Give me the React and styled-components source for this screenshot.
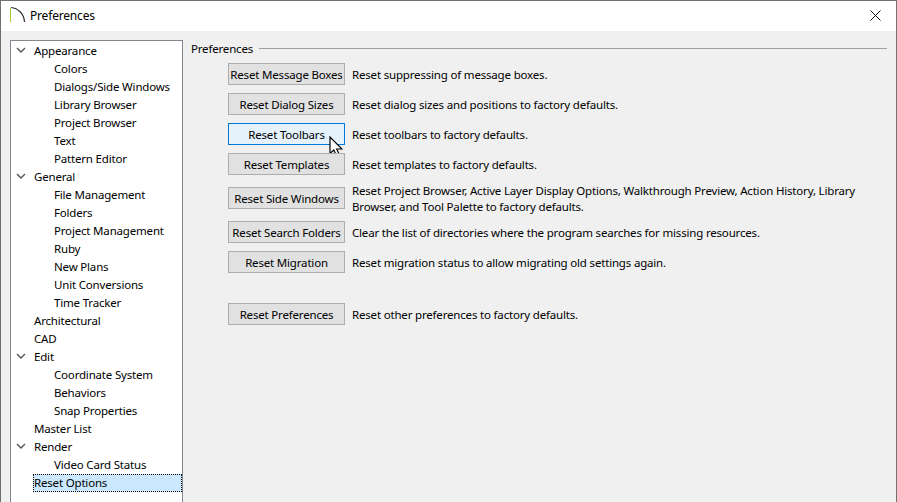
import React from "react";
import styled, { createGlobalStyle } from "styled-components";

const GlobalStyle = createGlobalStyle`
  html, body { margin: 0; padding: 0; background: #f0f0f0; }
  body { font-family: "Noto Sans", "Open Sans", sans-serif; font-size: 11.5px; letter-spacing: -0.18px; color: #000; }
`;

const Window = styled.div`
  width: 897px;
  height: 502px;
  box-sizing: border-box;
  border: 1px solid #707070;
  border-bottom: none;
  display: flex;
  flex-direction: column;
  overflow: hidden;
  background: #f0f0f0;
`;

const TitleBar = styled.div`
  height: 30px;
  flex: none;
  background: #fff;
  display: flex;
  align-items: center;
  padding: 0 15px 2px 9px;
  box-sizing: border-box;
  gap: 4px;
`;

const TitleText = styled.div`
  flex: 1;
  line-height: 28px;
  font-size: 12px;
  padding-top: 2px;
`;

const Body = styled.div`
  flex: 1;
  display: flex;
  padding: 9px 9px 0 9px;
  min-height: 0;
`;

const Tree = styled.div`
  width: 173px;
  flex: none;
  box-sizing: border-box;
  background: #fff;
  border: 1px solid #828790;
  border-bottom: none;
  padding-top: 1px;
`;

const TreeRow = styled.div`
  height: 18px;
  line-height: 18px;
  display: flex;
  align-items: center;
  padding-left: ${(p) => (p.$child ? "43px" : "23px")};
  position: relative;
  white-space: nowrap;
`;

const SelectedLabel = styled.div`
  flex: 1;
  align-self: stretch;
  background: #cce8ff;
  outline: 1px dotted #000;
  outline-offset: -1px;
  margin: 0 0 0 -1px;
  padding-left: 1px;
`;

const Chevron = styled.svg`
  position: absolute;
  left: 5px;
  top: 5px;
`;

const Panel = styled.div`
  flex: 1;
  padding-left: 8px;
  min-width: 0;
`;

const Legend = styled.div`
  display: flex;
  align-items: center;
  height: 16px;
  margin-bottom: 6px;
`;

const LegendLine = styled.div`
  flex: 1;
  height: 1px;
  background: #a0a0a0;
  margin-left: 6px;
`;

const Rows = styled.div`
  display: flex;
  flex-direction: column;
  gap: 8px;
  padding-left: 37px;
  margin-top: 7px;
`;

const Row = styled.div`
  display: flex;
  align-items: center;
  gap: 7px;
  height: ${(p) => (p.$tall ? "30px" : "22px")};
  margin-top: ${(p) => (p.$apart ? "22px" : "0")};
`;

const ResetButton = styled.div`
  width: 117px;
  height: 22px;
  flex: none;
  box-sizing: border-box;
  border: 1px solid ${(p) => (p.$hot ? "#0078d7" : "#adadad")};
  background: ${(p) => (p.$hot ? "#e5f1fb" : "#e1e1e1")};
  display: flex;
  align-items: center;
  justify-content: center;
  white-space: nowrap;
  position: relative;
`;

const Description = styled.div`
  line-height: 16px;
  width: 525px;
  flex: none;
  padding-top: 2px;
`;

const Pointer = styled.svg`
  position: absolute;
  left: 100px;
  top: 12px;
`;

const tree = [
  { label: "Appearance", open: true },
  { label: "Colors", child: true },
  { label: "Dialogs/Side Windows", child: true },
  { label: "Library Browser", child: true },
  { label: "Project Browser", child: true },
  { label: "Text", child: true },
  { label: "Pattern Editor", child: true },
  { label: "General", open: true },
  { label: "File Management", child: true },
  { label: "Folders", child: true },
  { label: "Project Management", child: true },
  { label: "Ruby", child: true },
  { label: "New Plans", child: true },
  { label: "Unit Conversions", child: true },
  { label: "Time Tracker", child: true },
  { label: "Architectural" },
  { label: "CAD" },
  { label: "Edit", open: true },
  { label: "Coordinate System", child: true },
  { label: "Behaviors", child: true },
  { label: "Snap Properties", child: true },
  { label: "Master List" },
  { label: "Render", open: true },
  { label: "Video Card Status", child: true },
  { label: "Reset Options", selected: true },
];

const resets = [
  { button: "Reset Message Boxes", text: "Reset suppressing of message boxes." },
  { button: "Reset Dialog Sizes", text: "Reset dialog sizes and positions to factory defaults." },
  { button: "Reset Toolbars", text: "Reset toolbars to factory defaults.", hot: true },
  { button: "Reset Templates", text: "Reset templates to factory defaults." },
  {
    button: "Reset Side Windows",
    text: "Reset Project Browser, Active Layer Display Options, Walkthrough Preview, Action History, Library Browser, and Tool Palette to factory defaults.",
    tall: true,
  },
  { button: "Reset Search Folders", text: "Clear the list of directories where the program searches for missing resources." },
  { button: "Reset Migration", text: "Reset migration status to allow migrating old settings again." },
  { button: "Reset Preferences", text: "Reset other preferences to factory defaults.", apart: true },
];

export default function App() {
  return (
    <Window>
      <GlobalStyle />
      <TitleBar>
        <svg width="16" height="18" viewBox="0 0 16 18">
          <path d="M0.5 2 V16" stroke="#a4cc2c" strokeWidth="1" fill="none" />
          <path d="M1 1.5 C8 2 14 7.5 14.5 16" stroke="#333" strokeWidth="1.2" fill="none" />
        </svg>
        <TitleText>Preferences</TitleText>
        <svg width="11" height="11" viewBox="0 0 11 11">
          <path d="M0.5 0.5 L10.5 10.5 M10.5 0.5 L0.5 10.5" stroke="#111" strokeWidth="1" fill="none" />
        </svg>
      </TitleBar>
      <Body>
        <Tree>
          {tree.map((item) => (
            <TreeRow key={item.label} $child={item.child}>
              {item.open && (
                <Chevron width="10" height="7" viewBox="0 0 10 7">
                  <path d="M1 1 L5 5 L9 1" stroke="#555" strokeWidth="1.4" fill="none" />
                </Chevron>
              )}
              {item.selected ? <SelectedLabel>{item.label}</SelectedLabel> : item.label}
            </TreeRow>
          ))}
        </Tree>
        <Panel>
          <Legend>
            Preferences
            <LegendLine />
          </Legend>
          <Rows>
            {resets.map((r) => (
              <Row key={r.button} $tall={r.tall} $apart={r.apart}>
                <ResetButton $hot={r.hot}>
                  {r.button}
                  {r.hot && (
                    <Pointer width="14" height="22" viewBox="0 0 14 22">
                      <path
                        d="M1 1 V17.5 L4.8 14 L7.6 20 L10.4 18.8 L7.7 13 L13 13 Z"
                        fill="#fff"
                        stroke="#000"
                        strokeWidth="1.2"
                      />
                    </Pointer>
                  )}
                </ResetButton>
                <Description>{r.text}</Description>
              </Row>
            ))}
          </Rows>
        </Panel>
      </Body>
    </Window>
  );
}
